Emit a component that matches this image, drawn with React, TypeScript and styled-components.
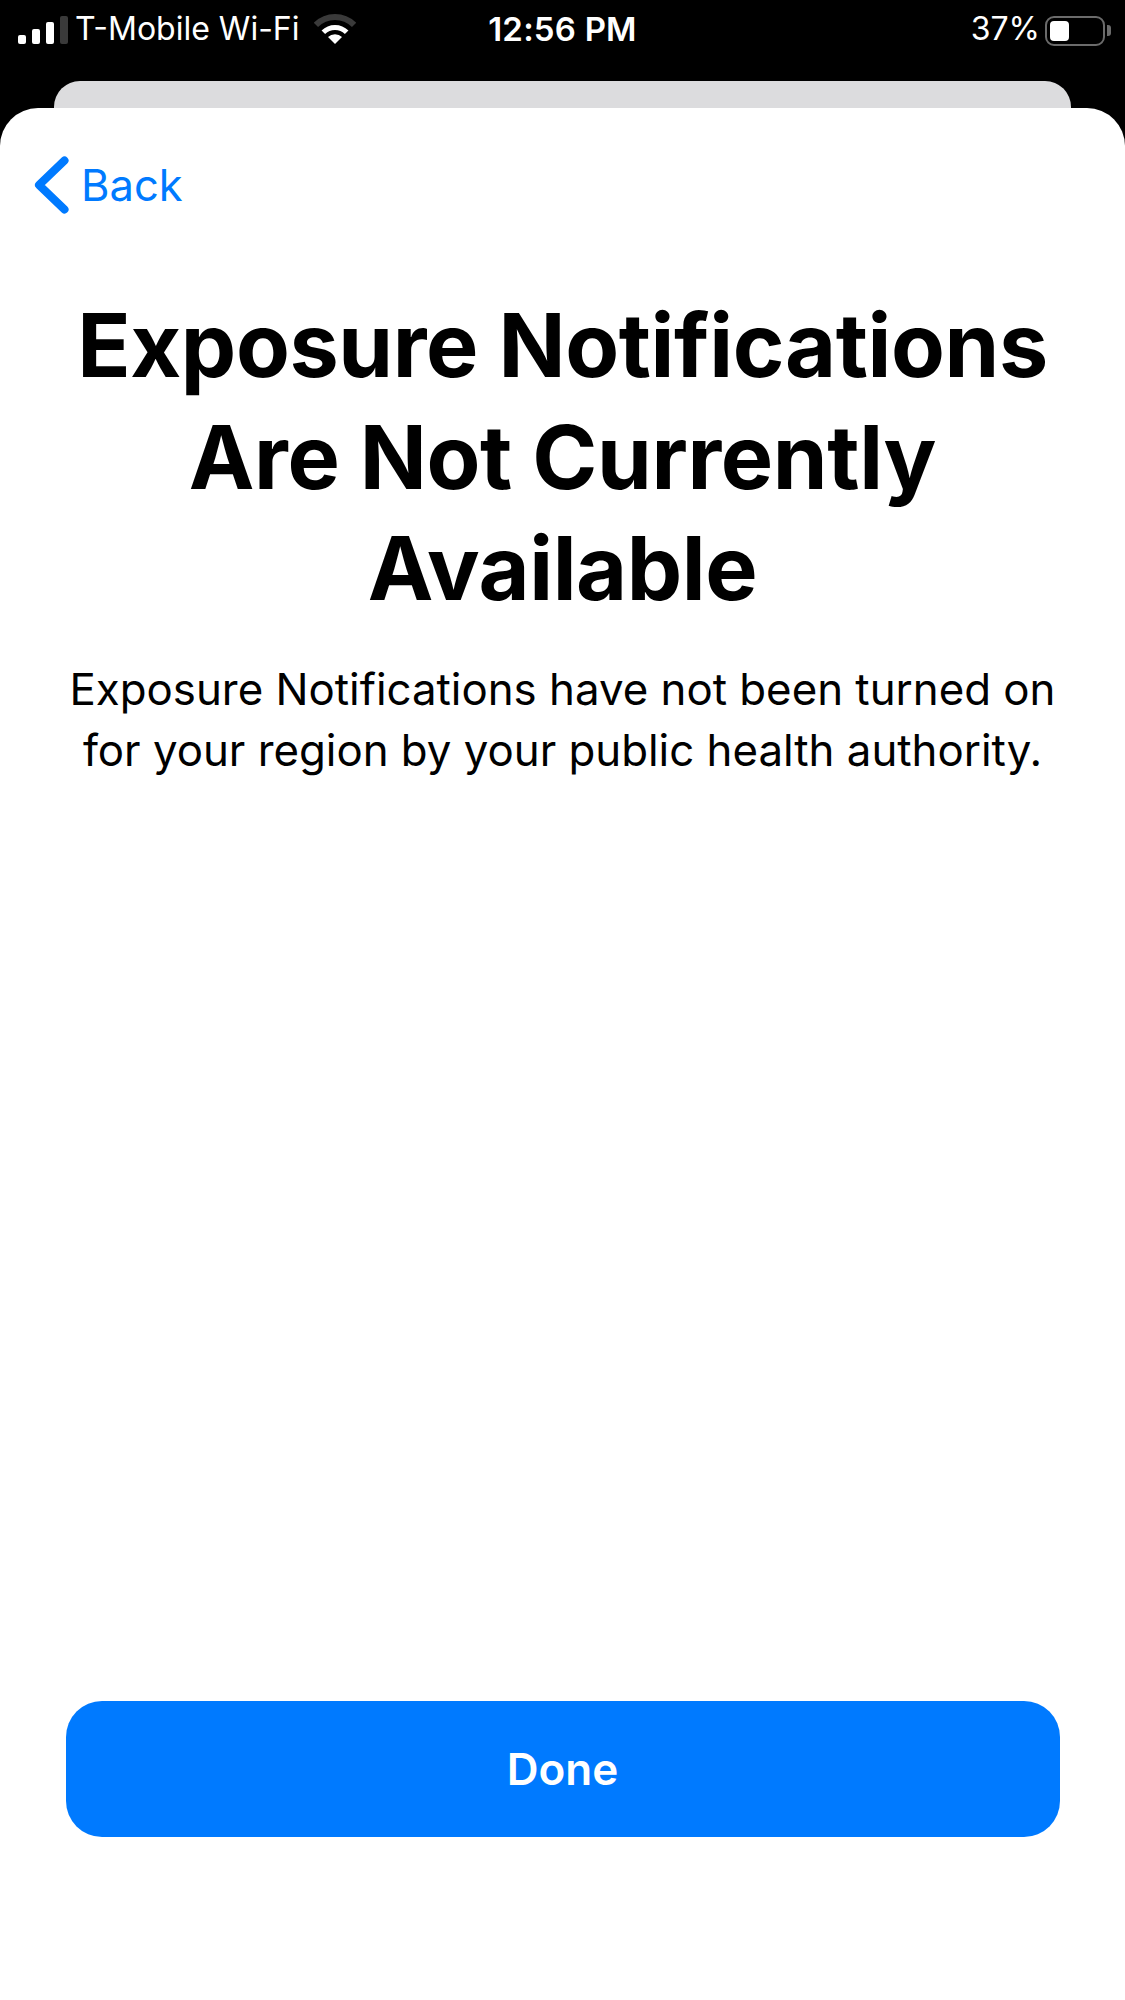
import styled, { createGlobalStyle } from 'styled-components';

const GlobalStyle = createGlobalStyle`
   html, body {
      margin: 0;
      padding: 0;
      background: #000;
   }
   * {
      box-sizing: border-box;
   }
`;

const Screen = styled.div`
   width: 1125px;
   height: 2000px;
   display: flex;
   flex-direction: column;
   overflow: hidden;
   background: #000;
   font-family: Inter, "Liberation Sans", sans-serif;
`;

const StatusBar = styled.div`
   height: 81px;
   padding: 11px 14px 0;
   display: grid;
   grid-template-columns: 1fr auto 1fr;
   align-items: start;
   color: #fff;
   font-size: 32px;
   line-height: 36px;
`;

const StatusLeft = styled.div`
   display: flex;
   align-items: center;
   gap: 7px;
`;

const StatusRight = styled.div`
   display: flex;
   align-items: center;
   justify-content: flex-end;
   gap: 5px;
`;

const Bars = styled.div`
   display: flex;
   align-items: flex-end;
   gap: 6px;
   height: 28px;
   margin-top: 2px;
   margin-left: 4px;
`;

const Bar = styled.div<{ $h: number; $off?: boolean }>`
   width: 8px;
   height: ${({ $h }) => $h}px;
   border-radius: 2px;
   background: ${({ $off }) => ($off ? '#3a3a3a' : '#fff')};
`;

const WifiSlot = styled.div`
   display: flex;
   margin-left: 7px;
`;

const Time = styled.div`
   font-size: 33px;
   font-weight: 600;
   letter-spacing: 0.2px;
`;

const BatteryWrap = styled.div`
   display: flex;
   align-items: center;
   gap: 2px;
   margin-top: 3px;
`;

const BatteryShell = styled.div`
   width: 60px;
   height: 30px;
   padding: 3px;
   border: 2.5px solid #6b6b6b;
   border-radius: 9px;
`;

const BatteryFill = styled.div`
   width: 19px;
   height: 100%;
   border-radius: 4px;
   background: #fff;
`;

const BatteryNub = styled.div`
   width: 4px;
   height: 11px;
   border-radius: 0 3px 3px 0;
   background: #6b6b6b;
`;

const BackCard = styled.div`
   height: 27px;
   margin: 0 54px;
   border-radius: 26px 26px 0 0;
   background: #dcdcde;
`;

const Sheet = styled.div`
   flex: 1;
   display: flex;
   flex-direction: column;
   align-items: center;
   padding-bottom: 163px;
   border-radius: 38px 38px 0 0;
   background: #fff;
`;

const Nav = styled.div`
   align-self: stretch;
   display: flex;
   align-items: center;
   gap: 10px;
   height: 60px;
   margin-top: 47px;
   padding-left: 31px;
   color: #007aff;
   font-size: 43.5px;
`;

const Title = styled.h1`
   margin: 75px 0 0;
   color: #000;
   font-size: 88px;
   font-weight: 700;
   line-height: 111.5px;
   letter-spacing: -0.4px;
   text-align: center;
`;

const Body = styled.p`
   margin: 34px 0 0;
   color: #000;
   font-size: 43.8px;
   font-weight: 400;
   line-height: 61px;
   text-align: center;
`;

const DoneButton = styled.button`
   width: 994px;
   height: 136px;
   margin-top: auto;
   border: none;
   border-radius: 36px;
   background: #007aff;
   color: #fff;
   font-family: inherit;
   font-size: 44px;
   font-weight: 600;
`;

const WifiIcon = () => (
   <svg width="42" height="30" viewBox="0 0 42 30" fill="none">
      <path d="M1.91 10.91A27 27 0 0 1 40.09 10.91" stroke="#3a3a3a" strokeWidth="6" />
      <path d="M9.33 18.33A16.5 16.5 0 0 1 32.67 18.33" stroke="#fff" strokeWidth="5" />
      <path d="M21 30L14 23A10 10 0 0 1 28 23Z" fill="#fff" />
   </svg>
);

const BackChevron = () => (
   <svg width="40" height="60" viewBox="0 0 40 60" fill="none">
      <path
         d="M33.5 5.5L8 30L33.5 54.5"
         stroke="#007aff"
         strokeWidth="8"
         strokeLinecap="round"
         strokeLinejoin="round"
      />
   </svg>
);

const App = () => (
   <Screen>
      <GlobalStyle />
      <StatusBar>
         <StatusLeft>
            <Bars>
               <Bar $h={9} />
               <Bar $h={15} />
               <Bar $h={22} />
               <Bar $h={28} $off />
            </Bars>
            <span>T-Mobile Wi-Fi</span>
            <WifiSlot>
               <WifiIcon />
            </WifiSlot>
         </StatusLeft>
         <Time>12:56 PM</Time>
         <StatusRight>
            <span>37%</span>
            <BatteryWrap>
               <BatteryShell>
                  <BatteryFill />
               </BatteryShell>
               <BatteryNub />
            </BatteryWrap>
         </StatusRight>
      </StatusBar>
      <BackCard />
      <Sheet>
         <Nav>
            <BackChevron />
            <span>Back</span>
         </Nav>
         <Title>
            Exposure Notifications
            <br />
            Are Not Currently
            <br />
            Available
         </Title>
         <Body>
            Exposure Notifications have not been turned on
            <br />
            for your region by your public health authority.
         </Body>
         <DoneButton>Done</DoneButton>
      </Sheet>
   </Screen>
);

export default App;
